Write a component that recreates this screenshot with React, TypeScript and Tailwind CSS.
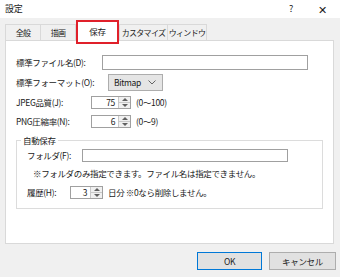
const font = { fontFamily: '"Noto Sans CJK JP", "Liberation Sans", sans-serif' };

function Spin({ value, w }: { value: string; w: string }) {
  return (
    <div className={`flex h-[13px] border border-[#a0a0a0] bg-white ${w}`}>
      <div className="flex-1 text-right pr-[3px] leading-[11px]">{value}</div>
      <div className="w-[12px] flex flex-col border-l border-[#c8c8c8] bg-[#f0f0f0]">
        <div className="flex-1 flex items-center justify-center border-b border-[#c8c8c8]">
          <div className="w-0 h-0 border-x-[3px] border-x-transparent border-b-[3px] border-b-[#606060]" />
        </div>
        <div className="flex-1 flex items-center justify-center">
          <div className="w-0 h-0 border-x-[3px] border-x-transparent border-t-[3px] border-t-[#606060]" />
        </div>
      </div>
    </div>
  );
}

const tabs = ['全般', '描画', '保存', 'カスタマイズ', 'ウィンドウ'];
const tabW = ['w-[36px]', 'w-[35px]', 'w-[43px]', 'w-[49px]', 'w-[39px]'];

export default function App() {
  return (
    <div className="w-[340px] h-[277px] bg-[#f0f0f0] flex flex-col text-[8.5px] tracking-[-0.35px] text-[#1a1a1a] overflow-hidden whitespace-nowrap" style={font}>
      <div className="h-[18px] bg-white flex items-center">
        <div className="pl-[5px] text-[9px] flex-1">設定</div>
        <div className="w-[16px] text-center text-[9px] mr-[15px]">?</div>
        <div className="w-[16px] text-center text-[11px] mr-[10px]">✕</div>
      </div>

      <div className="flex items-end h-[22px] pl-[5px] relative z-10">
        {tabs.map((t, i) =>
          i === 2 ? (
            <div key={t} className={`relative ${tabW[i]} h-[20px] -mb-px bg-white border border-b-0 border-[#d9d9d9] flex items-start justify-center pt-[3px]`}>
              {t}
              <div className="absolute -left-[1px] -right-[1px] -top-[2px] -bottom-[3px] border-2 border-[#e0202a]" />
            </div>
          ) : (
            <div key={t} className={`${tabW[i]} h-[16px] bg-[#f0f0f0] border border-b-0 border-[#d9d9d9] ${i === 1 || i === 4 ? 'border-l-0' : ''} flex items-center justify-center text-[8px] tracking-[-0.7px]`}>
              {t}
            </div>
          )
        )}
      </div>

      <div className="ml-[5px] w-[329px] h-[204px] bg-white border border-[#d9d9d9] pt-[11px]">
        <div className="flex items-center h-[20px] pl-[10px]">
          <div className="w-[86px]">標準ファイル名(D):</div>
          <div className="w-[206px] h-[15px] border border-[#a0a0a0]" />
        </div>
        <div className="flex items-center h-[20px] pl-[10px]">
          <div className="w-[92px]">標準フォーマット(O):</div>
          <div className="w-[55px] h-[17px] border border-[#adadad] bg-[#e5e5e5] flex items-center pl-[5px] justify-between pr-[6px]">
            <span>Bitmap</span>
            <svg width="8" height="5" viewBox="0 0 8 5"><path d="M0.5 0.5 L4 4 L7.5 0.5" fill="none" stroke="#555" strokeWidth="0.9" /></svg>
          </div>
        </div>
        <div className="flex items-center h-[20px] pl-[10px]">
          <div className="w-[75px]">JPEG品質(J):</div>
          <Spin value="75" w="w-[40px]" />
          <div className="ml-[5px]">(0〜100)</div>
        </div>
        <div className="flex items-center h-[19px] pl-[10px]">
          <div className="w-[75px]">PNG圧縮率(N):</div>
          <Spin value="6" w="w-[40px]" />
          <div className="ml-[5px]">(0〜9)</div>
        </div>

        <fieldset className="mx-[10px] mt-[3px] h-[75px] border border-[#dcdcdc] px-[10px]">
          <legend className="px-[2px] -ml-[6px]">自動保存</legend>
          <div className="flex items-center h-[17px]">
            <div className="w-[55px]">フォルダ(F):</div>
            <div className="w-[206px] h-[13px] border border-[#a0a0a0]" />
          </div>
          <div className="h-[20px] flex items-center pl-[6px]">※フォルダのみ指定できます。ファイル名は指定できません。</div>
          <div className="flex items-center h-[18px]">
            <div className="w-[43px]">履歴(H):</div>
            <Spin value="3" w="w-[33px]" />
            <div className="ml-[5px]">日分 ※0なら削除しません。</div>
          </div>
        </fieldset>
      </div>

      <div className="flex justify-end gap-[7px] pr-[4px] mt-[8px]">
        <div className="w-[65px] h-[18px] bg-[#e1e1e1] border border-[#0078d7] flex items-center justify-center">OK</div>
        <div className="w-[67px] h-[18px] bg-[#e1e1e1] border border-[#adadad] flex items-center justify-center">キャンセル</div>
      </div>
    </div>
  );
}
